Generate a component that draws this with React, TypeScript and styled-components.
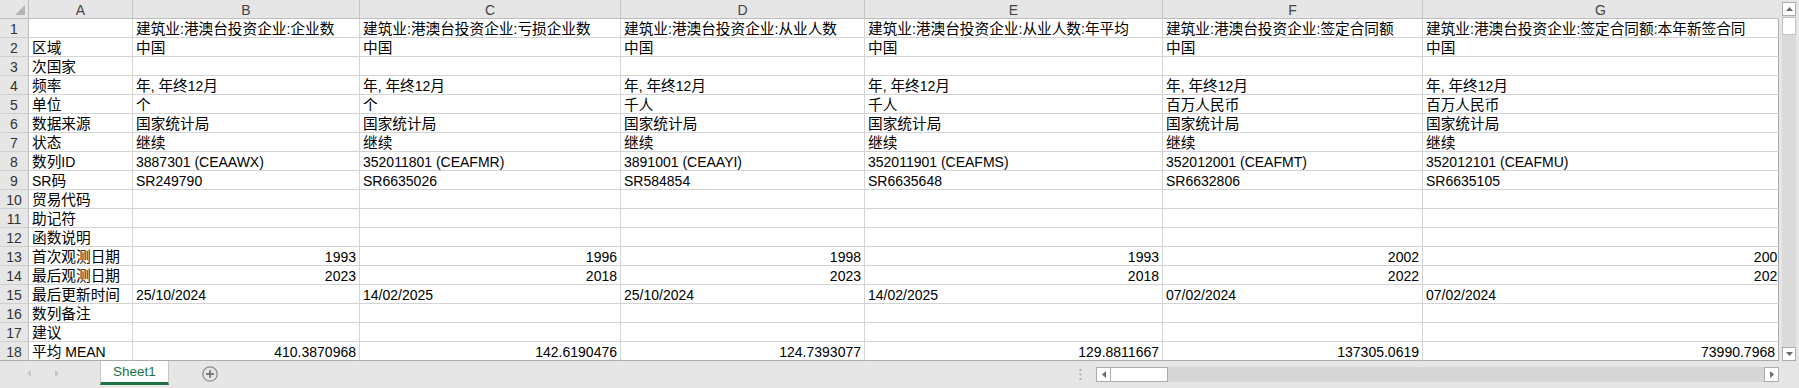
import React from 'react';
import styled, { createGlobalStyle } from 'styled-components';

const GlobalStyle = createGlobalStyle`
  html, body { margin: 0; padding: 0; background: #e6e6e6; }
  body { font-family: "Liberation Sans", Arial, "Noto Sans CJK SC", sans-serif; }
`;

const COLS = [29, 104, 227, 261, 244, 298, 260, 356];
const LETTERS = ['A', 'B', 'C', 'D', 'E', 'F', 'G'];

const Frame = styled.div`
  width: 1799px;
  height: 388px;
  display: flex;
  flex-direction: column;
  background: #e6e6e6;
  overflow: hidden;
  font-family: "Liberation Sans", Arial, "Noto Sans CJK SC", sans-serif;
  color: #000;
`;

const Top = styled.div`
  display: flex;
  height: 361px;
`;

const Sheet = styled.div`
  display: grid;
  grid-template-columns: ${COLS.map((c) => `${c}px`).join(' ')};
  grid-auto-rows: 19px;
  width: 1779px;
  height: 361px;
  background: #fff;
`;

const Corner = styled.div`
  box-sizing: border-box;
  background: #e6e6e6;
  border-right: 1px solid #bdbdbd;
  border-bottom: 1px solid #bdbdbd;
  display: flex;
  justify-content: flex-end;
  align-items: flex-end;
  padding: 0 3px 3px 0;
`;

const ColHead = styled.div<{ $last?: boolean }>`
  box-sizing: border-box;
  background: #e6e6e6;
  border-right: 1px solid ${(p) => (p.$last ? '#e6e6e6' : '#c6c6c6')};
  border-bottom: 1px solid #bdbdbd;
  text-align: center;
  font-size: 14px;
  line-height: 18px;
  padding-top: 1px;
  color: #444;
  overflow: hidden;
`;

const RowHead = styled.div<{ $bottom?: boolean }>`
  box-sizing: border-box;
  background: #e6e6e6;
  border-right: 1px solid #bdbdbd;
  border-bottom: 1px solid ${(p) => (p.$bottom ? '#ababab' : '#cfcfcf')};
  text-align: center;
  font-size: 14px;
  line-height: 19px;
  padding-top: 1px;
  color: #333;
  overflow: hidden;
  white-space: nowrap;
`;

const Cell = styled.div<{ $right?: boolean; $last?: boolean; $bottom?: boolean }>`
  box-sizing: border-box;
  border-right: 1px solid ${(p) => (p.$last ? '#ababab' : '#d4d4d4')};
  border-bottom: 1px solid ${(p) => (p.$bottom ? '#ababab' : '#d4d4d4')};
  padding: 1px 3px 0 3px;
  font-size: 14px;
  line-height: 19px;
  text-align: ${(p) => (p.$right ? 'right' : 'left')};
  white-space: nowrap;
  overflow: hidden;
`;

const Bleed = styled.span`
  display: inline-block;
  margin-right: -10px;
`;

const Han = styled.span`
  font-size: 14.67px;
`;

const VScroll = styled.div`
  display: flex;
  flex-direction: column;
  width: 14px;
  height: 359px;
  margin: 2px 3px 0 3px;
  background: #dadada;
`;

const ScrollBtn = styled.div<{ $w?: number }>`
  box-sizing: border-box;
  width: ${(p) => p.$w ?? 14}px;
  height: ${(p) => (p.$w ? 15 : 14)}px;
  flex: none;
  background: #fff;
  border: 1px solid #ababab;
  display: flex;
  align-items: center;
  justify-content: center;
`;

const VThumb = styled.div`
  box-sizing: border-box;
  height: 18px;
  margin-top: 1px;
  background: #fff;
  border: 1px solid #c2c2c2;
`;

const Fill = styled.div`
  flex: 1;
`;

const Bottom = styled.div`
  display: flex;
  align-items: flex-start;
  height: 27px;
`;

const NavGroup = styled.div`
  box-sizing: border-box;
  width: 100px;
  height: 24px;
  display: flex;
  align-items: center;
  padding-left: 27px;
  gap: 24px;
`;

const Tab = styled.div`
  box-sizing: border-box;
  width: 69px;
  height: 24px;
  background: #fff;
  border-left: 1px solid #c6c6c6;
  border-right: 1px solid #c6c6c6;
  border-bottom: 3px solid #217346;
  color: #217346;
  font-size: 13.5px;
  line-height: 21px;
  text-align: center;
`;

const AddSheet = styled.div`
  margin: 5px 0 0 33px;
  width: 16px;
  height: 16px;
  display: flex;
`;

const Splitter = styled.div`
  width: 5px;
  margin-top: 8px;
  display: flex;
  justify-content: center;
`;

const HScroll = styled.div`
  display: flex;
  width: 683px;
  height: 15px;
  margin: 6px 20px 0 13px;
  background: #d6d6d6;
`;

const HThumb = styled.div`
  box-sizing: border-box;
  width: 57px;
  height: 15px;
  background: #fff;
  border: 1px solid #ababab;
  border-left: none;
`;

type Row = { label: string; vals: string[] };

const T1 = '建筑业:港澳台投资企业:';
const rows: Row[] = [
  {
    label: '',
    vals: [
      T1 + '企业数',
      T1 + '亏损企业数',
      T1 + '从业人数',
      T1 + '从业人数:年平均',
      T1 + '签定合同额',
      T1 + '签定合同额:本年新签合同',
    ],
  },
  { label: '区域', vals: Array(6).fill('中国') },
  { label: '次国家', vals: Array(6).fill('') },
  { label: '频率', vals: Array(6).fill('年, 年终12月') },
  { label: '单位', vals: ['个', '个', '千人', '千人', '百万人民币', '百万人民币'] },
  { label: '数据来源', vals: Array(6).fill('国家统计局') },
  { label: '状态', vals: Array(6).fill('继续') },
  {
    label: '数列ID',
    vals: [
      '3887301 (CEAAWX)',
      '352011801 (CEAFMR)',
      '3891001 (CEAAYI)',
      '352011901 (CEAFMS)',
      '352012001 (CEAFMT)',
      '352012101 (CEAFMU)',
    ],
  },
  { label: 'SR码', vals: ['SR249790', 'SR6635026', 'SR584854', 'SR6635648', 'SR6632806', 'SR6635105'] },
  { label: '贸易代码', vals: Array(6).fill('') },
  { label: '助记符', vals: Array(6).fill('') },
  { label: '函数说明', vals: Array(6).fill('') },
  { label: '首次观测日期', vals: ['1993', '1996', '1998', '1993', '2002', '2002'] },
  { label: '最后观测日期', vals: ['2023', '2018', '2023', '2018', '2022', '2022'] },
  {
    label: '最后更新时间',
    vals: ['25/10/2024', '14/02/2025', '25/10/2024', '14/02/2025', '07/02/2024', '07/02/2024'],
  },
  { label: '数列备注', vals: Array(6).fill('') },
  { label: '建议', vals: Array(6).fill('') },
  {
    label: '平均 MEAN',
    vals: ['410.3870968', '142.6190476', '124.7393077', '129.8811667', '137305.0619', '73990.7968'],
  },
];

const isNum = (s: string) => /^[\d.]+$/.test(s);

function Txt({ s }: { s: string }) {
  const parts = s.split(/([\u3400-\u9fff]+)/).filter((p) => p.length > 0);
  return (
    <>
      {parts.map((p, i) =>
        /[\u3400-\u9fff]/.test(p) ? <Han key={i}>{p}</Han> : <React.Fragment key={i}>{p}</React.Fragment>
      )}
    </>
  );
}

const Tri = ({ dir, color = '#6b6b6b' }: { dir: 'up' | 'down' | 'left' | 'right'; color?: string }) => {
  const pts =
    dir === 'up'
      ? '0,4 7,4 3.5,0'
      : dir === 'down'
      ? '0,0 7,0 3.5,4'
      : dir === 'left'
      ? '4,0 4,7 0,3.5'
      : '0,0 0,7 4,3.5';
  const w = dir === 'up' || dir === 'down' ? 7 : 4;
  const h = dir === 'up' || dir === 'down' ? 4 : 7;
  return (
    <svg width={w} height={h} viewBox={`0 0 ${w} ${h}`}>
      <polygon points={pts} fill={color} />
    </svg>
  );
};

export default function App() {
  return (
    <>
      <GlobalStyle />
      <Frame>
        <Top>
          <Sheet>
            <Corner>
              <svg width="10" height="10" viewBox="0 0 10 10">
                <polygon points="10,0 10,10 0,10" fill="#b4b4b4" />
              </svg>
            </Corner>
            {LETTERS.map((l, i) => (
              <ColHead key={l} $last={i === 6}>
                {l}
              </ColHead>
            ))}
            {rows.map((r, ri) => {
              const bottom = ri === rows.length - 1;
              return (
                <React.Fragment key={ri}>
                  <RowHead $bottom={bottom}>{ri + 1}</RowHead>
                  <Cell $bottom={bottom}>
                    <Txt s={r.label} />
                  </Cell>
                  {r.vals.map((v, ci) => {
                    const bleed = ci === 5 && (ri === 12 || ri === 13);
                    return (
                      <Cell key={ci} $right={isNum(v)} $last={ci === 5} $bottom={bottom}>
                        {bleed ? <Bleed>{v}</Bleed> : <Txt s={v} />}
                      </Cell>
                    );
                  })}
                </React.Fragment>
              );
            })}
          </Sheet>
          <VScroll>
            <ScrollBtn>
              <Tri dir="up" />
            </ScrollBtn>
            <VThumb />
            <Fill />
            <ScrollBtn>
              <Tri dir="down" />
            </ScrollBtn>
          </VScroll>
        </Top>
        <Bottom>
          <NavGroup>
            <Tri dir="left" color="#c4c4c4" />
            <Tri dir="right" color="#c4c4c4" />
          </NavGroup>
          <Tab>Sheet1</Tab>
          <AddSheet>
            <svg width="16" height="16" viewBox="0 0 16 16">
              <circle cx="8" cy="8" r="7.2" fill="none" stroke="#8c8c8c" strokeWidth="1.3" />
              <path d="M8 4.2v7.6M4.2 8h7.6" stroke="#777" strokeWidth="1.8" />
            </svg>
          </AddSheet>
          <Fill />
          <Splitter>
            <svg width="3" height="11" viewBox="0 0 3 11">
              <rect x="0.5" y="0" width="2" height="2" fill="#b0b0b0" />
              <rect x="0.5" y="4.5" width="2" height="2" fill="#b0b0b0" />
              <rect x="0.5" y="9" width="2" height="2" fill="#b0b0b0" />
            </svg>
          </Splitter>
          <HScroll>
            <ScrollBtn $w={15}>
              <Tri dir="left" />
            </ScrollBtn>
            <HThumb />
            <Fill />
            <ScrollBtn $w={15}>
              <Tri dir="right" />
            </ScrollBtn>
          </HScroll>
        </Bottom>
      </Frame>
    </>
  );
}
